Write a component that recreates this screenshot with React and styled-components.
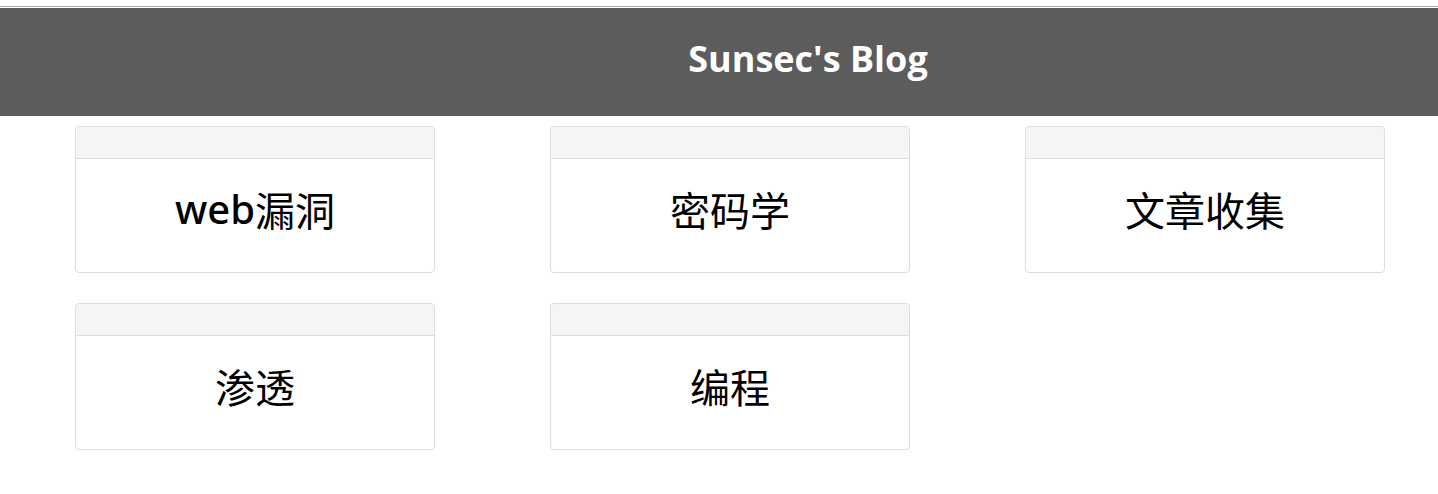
import React from 'react'
import styled, { createGlobalStyle } from 'styled-components'

const Global = createGlobalStyle`
body {
    margin: 0;
    background: #fff;
    font-family: "Noto Sans", "Noto Sans CJK SC", sans-serif;
}
`

const categories = ['web漏洞', '密码学', '文章收集', '渗透', '编程']

// latin letters in the card titles come out a little heavier than the hanzi
const Label = ({ text }) => {
    const parts = text.split(/([A-Za-z]+)/).filter(Boolean)
    return parts.map((p, i) =>
        /[A-Za-z]/.test(p) ? <Latin key={i}>{p}</Latin> : <span key={i}>{p}</span>
    )
}

const App = () => {
    return (
        <>
            <Global />
            <Page>
                <TopLine />
                <Header>
                    <Title>Sunsec's Blog</Title>
                </Header>
                <Grid>
                    {categories.map((name) => (
                        <Card key={name}>
                            <CardHead />
                            <CardBody>
                                <Label text={name} />
                            </CardBody>
                        </Card>
                    ))}
                </Grid>
            </Page>
        </>
    )
}

export default App

const Page = styled.div`
padding-top: 6px;
`

const TopLine = styled.div`
height: 1px;
background: #a9a9a9;
margin-bottom: 1px;
`

const Header = styled.div`
background-color: #5c5c5c;
height: 108px;
box-sizing: border-box;
display: flex;
align-items: center;
justify-content: center;
padding: 0 0 8px 178px;
`

const Title = styled.h1`
margin: 0;
color: #fff;
font-size: 36px;
font-weight: 700;
font-family: "Open Sans", "Noto Sans", sans-serif;
`

const Grid = styled.div`
display: grid;
grid-template-columns: repeat(3, 360px);
column-gap: 115px;
row-gap: 30px;
padding: 10px 0 0 75px;
`

const Card = styled.div`
border: 1px solid #dddddd;
border-radius: 4px;
height: 147px;
box-sizing: border-box;
display: flex;
flex-direction: column;
overflow: hidden;
`

const CardHead = styled.div`
height: 31px;
background: #f5f5f5;
border-bottom: 1px solid #dddddd;
`

const CardBody = styled.div`
flex: 1;
display: flex;
align-items: center;
justify-content: center;
font-size: 40px;
color: #000;
padding-bottom: 14px;
`

const Latin = styled.span`
font-weight: 500;
`
